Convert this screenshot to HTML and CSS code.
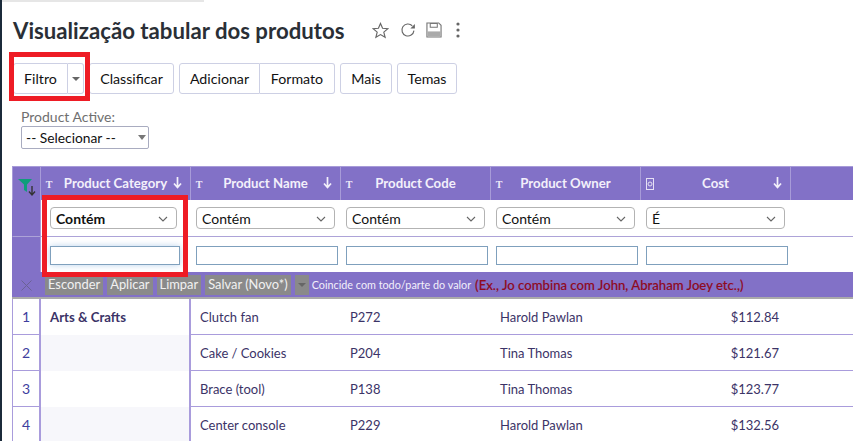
FILE: index.html
```html
<!DOCTYPE html>
<html lang="pt">
<head>
<meta charset="utf-8">
<title>Visualização tabular dos produtos</title>
<link rel="stylesheet" href="styles.css">
</head>
<body>
<div class="topline"></div>
<main class="page">
  <header class="title-row">
    <h1>Visualização tabular dos produtos</h1>
    <div class="title-icons">
      <svg class="ico ico-star" width="17" height="17" viewBox="0 0 18 18"><path d="M9 1.5l2.2 5.2 5.6.4-4.3 3.6 1.4 5.5L9 13.3l-4.9 2.9 1.4-5.5L1.2 7.1l5.6-.4z" fill="none" stroke="#666" stroke-width="1.2"/></svg>
      <svg class="ico ico-refresh" width="16" height="16" viewBox="0 0 17 17"><path d="M14.8 9.2a6.4 6.4 0 1 1-1.8-5.2" fill="none" stroke="#666" stroke-width="1.2"/><path d="M15.8 2v4.8H11z" fill="#666"/></svg>
      <svg class="ico ico-save" width="16" height="16" viewBox="0 0 17 17"><path d="M1 1h12.5L16 3.5V16H1z" fill="none" stroke="#777" stroke-width="1.2"/><path d="M4.5 1.5h7.5v4H4.5z" fill="none" stroke="#777" stroke-width="1.1"/><path d="M1.5 10h14v5.5h-14z" fill="#aaa"/></svg>
      <svg class="ico ico-more" width="4" height="16" viewBox="0 0 4 16"><circle cx="2" cy="2" r="1.6" fill="#666"/><circle cx="2" cy="8" r="1.6" fill="#666"/><circle cx="2" cy="14" r="1.6" fill="#666"/></svg>
    </div>
  </header>

  <nav class="toolbar">
    <div class="btn-group">
      <button class="btn btn-filter">Filtro</button>
      <button class="btn btn-caret"><span class="caret"></span></button>
    </div>
    <button class="btn btn-sort">Classificar</button>
    <div class="btn-group">
      <button class="btn btn-add">Adicionar</button>
      <button class="btn btn-format">Formato</button>
    </div>
    <button class="btn btn-more">Mais</button>
    <button class="btn btn-themes">Temas</button>
    <div class="highlight highlight-filter"></div>
  </nav>

  <section class="param">
    <label class="param-label">Product Active:</label>
    <div class="fake-select">-- Selecionar --<span class="caret caret-dark"></span></div>
  </section>

  <div class="table-wrap">
    <table class="grid">
      <colgroup>
        <col class="c-num"><col class="c-cat"><col class="c-col"><col class="c-col"><col class="c-col"><col class="c-col"><col class="c-rest">
      </colgroup>
      <thead>
        <tr class="head">
          <th class="corner">
            <svg width="22" height="20" viewBox="0 0 22 20"><path d="M1 1h14l-5 5.5V14L7 12V6.5z" fill="#0f9d7a"/><path d="M15 8v8M12 13.5l3 3.5 3-3.5" fill="none" stroke="#333" stroke-width="1.4"/></svg>
          </th>
          <th><div class="th"><span class="t">T</span><span class="th-label">Product Category</span><span class="arrow"><svg width="9" height="12" viewBox="0 0 9 12"><path d="M4.5 0v10.5M1 6.5l3.5 4 3.5-4" fill="none" stroke="#f3f0fb" stroke-width="1.7"/></svg></span></div></th>
          <th><div class="th"><span class="t">T</span><span class="th-label">Product Name</span><span class="arrow"><svg width="9" height="12" viewBox="0 0 9 12"><path d="M4.5 0v10.5M1 6.5l3.5 4 3.5-4" fill="none" stroke="#f3f0fb" stroke-width="1.7"/></svg></span></div></th>
          <th><div class="th"><span class="t">T</span><span class="th-label">Product Code</span><span class="arrow"></span></div></th>
          <th><div class="th"><span class="t">T</span><span class="th-label">Product Owner</span><span class="arrow"></span></div></th>
          <th><div class="th"><span class="t"><svg class="coin" width="8" height="12" viewBox="0 0 8 12"><rect x=".5" y=".5" width="7" height="11" fill="none" stroke="#e6e0f5"/><circle cx="4" cy="6" r="2" fill="none" stroke="#e6e0f5"/></svg></span><span class="th-label">Cost</span><span class="arrow"><svg width="9" height="12" viewBox="0 0 9 12"><path d="M4.5 0v10.5M1 6.5l3.5 4 3.5-4" fill="none" stroke="#f3f0fb" stroke-width="1.7"/></svg></span></div></th>
          <th></th>
        </tr>
        <tr class="f-select">
          <td class="side"></td>
          <td><div class="cond bold">Contém<svg class="chev" width="10" height="6" viewBox="0 0 10 6"><path d="M1 1l4 4 4-4" fill="none" stroke="#666" stroke-width="1.1"/></svg></div></td>
          <td><div class="cond">Contém<svg class="chev" width="10" height="6" viewBox="0 0 10 6"><path d="M1 1l4 4 4-4" fill="none" stroke="#666" stroke-width="1.1"/></svg></div></td>
          <td><div class="cond">Contém<svg class="chev" width="10" height="6" viewBox="0 0 10 6"><path d="M1 1l4 4 4-4" fill="none" stroke="#666" stroke-width="1.1"/></svg></div></td>
          <td><div class="cond">Contém<svg class="chev" width="10" height="6" viewBox="0 0 10 6"><path d="M1 1l4 4 4-4" fill="none" stroke="#666" stroke-width="1.1"/></svg></div></td>
          <td><div class="cond">É<svg class="chev" width="10" height="6" viewBox="0 0 10 6"><path d="M1 1l4 4 4-4" fill="none" stroke="#666" stroke-width="1.1"/></svg></div></td>
          <td></td>
        </tr>
        <tr class="f-input">
          <td class="side"></td>
          <td><div class="field focus"></div></td>
          <td><div class="field"></div></td>
          <td><div class="field"></div></td>
          <td><div class="field"></div></td>
          <td><div class="field"></div></td>
          <td></td>
        </tr>
        <tr class="actions">
          <td class="close"><svg width="11" height="11" viewBox="0 0 11 11"><path d="M.5.5l10 10M10.5.5l-10 10" stroke="#6b6296" stroke-width="1"/></svg></td>
          <td colspan="6">
            <div class="action-row">
              <span class="a-btn">Esconder</span><span class="a-btn">Aplicar</span><span class="a-btn">Limpar</span><span class="a-btn">Salvar (Novo*)</span><span class="a-btn a-caret"><span class="caret"></span></span>
              <span class="hint">Coincide com todo/parte do valor</span>
              <span class="example">(Ex., Jo combina com John, Abraham Joey etc.,)</span>
            </div>
          </td>
        </tr>
      </thead>
      <tbody>
        <tr><td class="num">1</td><td class="cat">Arts &amp; Crafts</td><td>Clutch fan</td><td>P272</td><td>Harold Pawlan</td><td class="cost">$112.84</td><td></td></tr>
        <tr><td class="num">2</td><td class="cat alt"></td><td>Cake / Cookies</td><td>P204</td><td>Tina Thomas</td><td class="cost">$121.67</td><td></td></tr>
        <tr><td class="num">3</td><td class="cat"></td><td>Brace (tool)</td><td>P138</td><td>Tina Thomas</td><td class="cost">$123.77</td><td></td></tr>
        <tr><td class="num">4</td><td class="cat alt"></td><td>Center console</td><td>P229</td><td>Harold Pawlan</td><td class="cost">$132.56</td><td></td></tr>
      </tbody>
    </table>
    <div class="highlight highlight-cat"></div>
  </div>
</main>
</body>
</html>
```
FILE: styles.css
```css
* { box-sizing: border-box; }
html, body { margin: 0; height: 100%; }
body {
  font-family: Lato, "Open Sans", sans-serif;
  background: #fff;
  color: #000;
  overflow: hidden;
  border-left: 2px solid #1b2a3a;
}
.topline { height: 2px; background: #e6e6e6; width: 202px; }
.page { padding-left: 10px; }

.title-row { display: flex; align-items: center; height: 40px; margin-top: 8px; padding-left: 1px; }
h1 { margin: 0; font-size: 22.2px; font-weight: 700; color: #2a2f36; white-space: nowrap; }
.title-icons { display: flex; align-items: center; gap: 11px; margin-left: 28px; margin-top: 0; }
.ico-save { margin-left: -1px; }
.ico-more { margin-left: 3px; }

.toolbar { position: relative; display: flex; gap: 5px; margin-top: 13px; height: 31px; padding-left: 1px; }
.btn-group { display: flex; }
.btn {
  font-family: inherit; font-size: 14.2px; height: 31px; padding: 0;
  background: #fff; color: #111; border: 1px solid #cdd0e4; border-radius: 3px;
}
.btn-group .btn:first-child { border-radius: 3px 0 0 3px; }
.btn-group .btn:last-child { border-radius: 0 3px 3px 0; border-left: 0; }
.btn-filter { width: 55px; }
.btn-caret { width: 16px; display: flex; align-items: center; justify-content: center; }
.btn-sort { width: 85px; }
.btn-add { width: 81px; }
.btn-format { width: 75px; }
.btn-more { width: 52px; }
.btn-themes { width: 60px; }
.caret { display: inline-block; width: 0; height: 0; border-left: 4px solid transparent; border-right: 4px solid transparent; border-top: 4px solid #666; }
.highlight { position: absolute; border: 5px solid #ee1c25; pointer-events: none; }
.highlight-filter { left: -3px; top: -11px; width: 81px; height: 49px; }

.param { margin: 14px 0 0 9px; }
.param-label { display: block; font-size: 14px; line-height: 17px; color: #6f6f6f; }
.fake-select {
  position: relative; width: 128px; height: 23px; margin-top: 1px; padding-left: 4px;
  font-size: 13.8px; line-height: 21px; color: #111;
  border: 1px solid #a9acc0; border-radius: 2px;
}
.fake-select .caret { position: absolute; right: 2px; top: 8px; border-left-width: 4.5px; border-right-width: 4.5px; border-top-width: 5px; }
.caret-dark { border-top-color: #777; }

.table-wrap { position: relative; margin-top: 17px; width: 841px; overflow: hidden; }
.grid { table-layout: fixed; border-collapse: separate; border-spacing: 0; width: 841px; font-size: 13px; }
.c-num { width: 29px; } .c-cat { width: 150px; } .c-col { width: 150px; } .c-rest { width: 62px; }
.grid td, .grid th { padding: 0; }

.head th { height: 34px; background: #8271c7; border-top: 1px solid #a79bd8; border-right: 1px solid #a79bd8; color: #fff; font-size: 13px; font-weight: 700; vertical-align: middle; }
.head th:last-child { border-right: 0; }
.corner { border-left: 1px solid #a79bd8; }
.corner svg { display: block; margin: 9px 0 0 4px; }
.th { display: flex; align-items: center; padding: 0 8px 2px 4px; height: 33px; }
.t { font-family: "Liberation Serif", serif; font-size: 10px; color: #efeaf9; width: 14px; margin: 4px 0 0 0; }
.th .t { position: relative; left: -3px; }
.coin { display: block; margin-left: 4px; margin-top: -2px; }
.th-label { flex: 1; text-align: center; white-space: nowrap; color: #f3f0fb; font-size: 13.2px; padding-right: 1px; }
.arrow { width: 9px; height: 12px; }
.arrow svg { display: block; }

.side { background: #8271c7; border-right: 1px solid #a79bd8; }
.f-select td { height: 37px; border-bottom: 1px solid #ada3d8; }
.f-input td { height: 35px; padding-top: 1px; }
.f-select .side, .f-input .side { border-left: 1px solid #8271c7; }
.cond {
  position: relative; display: flex; align-items: center; width: 139px; height: 22px;
  margin: 0 0 0 5px; padding-left: 5px; font-size: 14px; color: #111;
  border: 1px solid #b3b3b3; border-radius: 4px; background: #fff;
}
.cond.bold { width: 127px; margin-left: 9px; font-weight: 700; }
.chev { position: absolute; right: 8px; top: 8px; }
.field { width: 142px; height: 19px; margin-left: 5px; border: 1px solid #7fa0bd; background: #fff; }
.field.focus { width: 130px; margin-left: 9px; box-shadow: 0 0 6px rgba(120,170,220,.5); }

.actions td { height: 27px; background: #8271c7; border-bottom: 2px solid #aaa; }
.close { text-align: center; }
.close svg { display: block; margin: 1px auto 0; }
.action-row { display: flex; align-items: center; gap: 4px; padding-left: 4px; white-space: nowrap; }
.a-btn { background: #8a8a8a; color: #f1f1f1; font-size: 12.9px; line-height: 19px; height: 20px; padding: 0 3px; }
.a-btn.a-caret { width: 14px; padding: 0; display: flex; align-items: center; justify-content: center; }
.hint { color: #f3f0fb; font-size: 10.8px; margin-left: -1px; }
.example { color: #8f0a1e; font-size: 13.15px; font-weight: 500; margin-left: 0; -webkit-text-stroke: .15px #8f0a1e; }

tbody td { height: 36px; font-size: 13px; color: #3b3367; border-bottom: 1px solid #a99cdc; padding-left: 9px !important; }
tbody .num { padding-left: 0 !important; text-align: center; color: #3e3e9e; font-size: 14px; border-left: 1px solid #a99cdc; border-right: 2px solid #a99cdc; }
tbody .cat { border-bottom: 0; border-right: 2px solid #a99cdc; font-weight: 700; font-size: 13.2px; background: #fff; }
tbody .cat.alt { background: #f7f7fb; }
tbody .cost { text-align: right; padding-right: 12px; }
.highlight-cat { left: 30px; top: 29px; width: 146px; height: 82px; }
```
